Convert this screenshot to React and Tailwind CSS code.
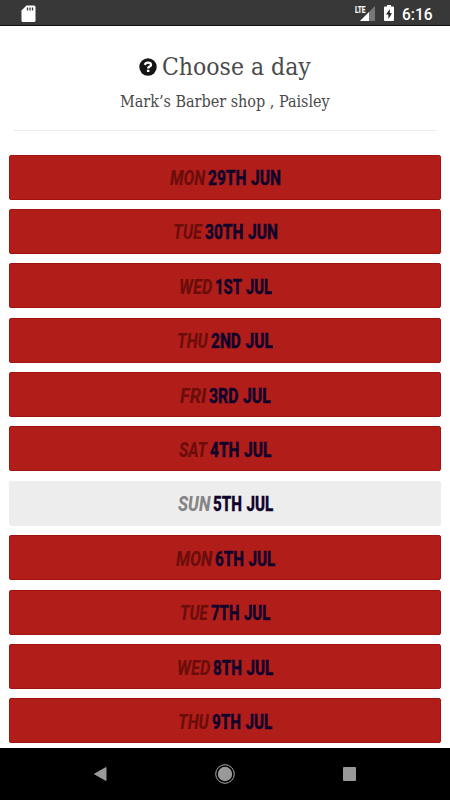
import React, { useLayoutEffect, useRef, useState } from "react";

const days = [
  { day: "MON", date: "29TH JUN", dayWidth: 35, dateWidth: 73 },
  { day: "TUE", date: "30TH JUN", dayWidth: 29, dateWidth: 73 },
  { day: "WED", date: "1ST JUL", dayWidth: 33, dateWidth: 57 },
  { day: "THU", date: "2ND JUL", dayWidth: 31, dateWidth: 62 },
  { day: "FRI", date: "3RD JUL", dayWidth: 26, dateWidth: 62 },
  { day: "SAT", date: "4TH JUL", dayWidth: 28, dateWidth: 61 },
  { day: "SUN", date: "5TH JUL", dayWidth: 32, dateWidth: 60, closed: true },
  { day: "MON", date: "6TH JUL", dayWidth: 36, dateWidth: 60 },
  { day: "TUE", date: "7TH JUL", dayWidth: 28, dateWidth: 59 },
  { day: "WED", date: "8TH JUL", dayWidth: 33, dateWidth: 60 },
  { day: "THU", date: "9TH JUL", dayWidth: 31, dateWidth: 60 },
];

// condenses a line of text to the given width
function FitText({ width, className, children }) {
  const ref = useRef(null);
  const [scale, setScale] = useState(1);

  useLayoutEffect(() => {
    setScale(width / ref.current.offsetWidth);
  }, [width, children]);

  return (
    <span className="block shrink-0 whitespace-nowrap" style={{ width }}>
      <span
        ref={ref}
        className={`inline-block origin-left ${className}`}
        style={{ transform: `scaleX(${scale})` }}
      >
        {children}
      </span>
    </span>
  );
}

function StatusBar() {
  return (
    <div className="h-[26px] shrink-0 bg-[#383838] border-b border-[#111] flex items-center justify-between pl-[21px] pr-[17px]">
      <svg width="15" height="18" viewBox="0 0 15 18" className="mt-[2px]">
        <path d="M5.5 0.5H13a1.5 1.5 0 0 1 1.5 1.5v13.500a1.500 1.500 0 0 1-1.500 1.500H2a1.500 1.500 0 0 1-1.500-1.500V5.500z" fill="#fff" />
        <path d="M6.500 2.500v3M9 2.500v3M11.500 2.500v3" stroke="#383838" strokeWidth="1.300" />
      </svg>
      <div className="flex items-center text-white">
        <svg width="22" height="17" viewBox="0 0 22 17" className="mt-px">
          <path d="M5 16 20 1V16z" fill="#777" />
          <path d="M5 16 14 7V16z" fill="#fff" />
          <text x="0" y="8" textLength="10.500" lengthAdjust="spacingAndGlyphs" fill="#fff" stroke="#fff" strokeWidth="0.200" fontSize="9.500" fontWeight="700" fontFamily="Roboto, sans-serif">
            LTE
          </text>
        </svg>
        <svg width="10" height="16" viewBox="0 0 10 16" className="ml-[7px] mt-px">
          <path d="M3 0h4v1.500h2a1 1 0 0 1 1 1V15a1 1 0 0 1-1 1H1a1 1 0 0 1-1-1V2.500a1 1 0 0 1 1-1h2z" fill="#fff" />
          <path d="M5.800 4 2 9.500h2.400V14L8 8.200H5.800z" fill="#222" />
        </svg>
        <span className="ml-[8px] mt-[2px] block">
          <FitText width={31} className="font-['Roboto',sans-serif] text-[16px] leading-[18px] font-medium">6:16</FitText>
        </span>
      </div>
    </div>
  );
}

function Header() {
  return (
    <div className="h-[105px] shrink-0 mx-[14px] border-b border-[#ebebeb] flex flex-col items-center text-[#4a4a4a]">
      <div className="mt-[23px] flex h-[36px] items-center gap-[5px]">
        <svg width="18" height="18" viewBox="0 0 18 18">
          <circle cx="9" cy="9" r="8.700" fill="#151515" />
          <path d="M5.800 6.900C6.300 5.200 7.500 4.600 9 4.600c1.800 0 3 .9 3 2.300 0 1.900-2.900 1.500-2.900 3.600" fill="none" stroke="#fff" strokeWidth="2.300" />
          <path d="M7.900 11.700h2.500v2.300H7.900z" fill="#fff" />
        </svg>
        <FitText width={149} className="font-['DejaVu_Serif_Condensed','DejaVu_Serif',serif] text-[25px] leading-[36px]">
          Choose a day
        </FitText>
      </div>
      <div className="mt-[4px]">
        <FitText width={210} className="font-['DejaVu_Serif_Condensed','DejaVu_Serif',serif] text-[16px] leading-[24px]">
          Mark’s Barber shop , Paisley
        </FitText>
      </div>
    </div>
  );
}

function DayRow({ day, date, dayWidth, dateWidth, closed }) {
  const rowColor = closed ? "bg-[#ededed] border-[#ededed]" : "bg-[#b11e1a] border-[#a11210]";
  const dayColor = closed ? "text-[#858585]" : "text-[#6b0d0b]";

  return (
    <div className={`h-[45px] shrink-0 rounded-[2px] border pt-[2px] pl-[0.500px] flex items-center justify-center gap-[3px] font-['Roboto',sans-serif] text-[21px] leading-[26px] font-extrabold ${rowColor}`}>
      <FitText width={dayWidth} className={`italic ${dayColor}`}>{day}</FitText>
      <FitText width={dateWidth} className="[word-spacing:1px] [-webkit-text-stroke:0.4px_#10032b] text-[#10032b]">{date}</FitText>
    </div>
  );
}

function NavBar() {
  return (
    <div className="h-[52px] shrink-0 bg-black flex items-center justify-between px-[93px]">
      <svg width="15" height="16" viewBox="0 0 15 16">
        <path d="M1.500 8 13 1.500v13z" fill="#999" stroke="#999" strokeLinejoin="round" />
      </svg>
      <svg width="20" height="20" viewBox="0 0 20 20" className="-ml-px">
        <circle cx="10" cy="10" r="9.300" fill="none" stroke="#aaa" />
        <circle cx="10" cy="10" r="7.200" fill="#999" />
      </svg>
      <svg width="14" height="14" viewBox="0 0 14 14">
        <rect width="13" height="14" rx="1" fill="#999" />
      </svg>
    </div>
  );
}

export default function App() {
  return (
    <div className="w-[450px] h-[800px] overflow-hidden bg-white flex flex-col">
      <StatusBar />
      <Header />
      <div className="h-[617px] shrink-0 overflow-hidden pt-[23.500px] pl-[9.400px] pr-[9.400px] flex flex-col gap-[9.400px]">
        {days.map((item) => (
          <DayRow key={item.date} {...item} />
        ))}
      </div>
      <NavBar />
    </div>
  );
}
